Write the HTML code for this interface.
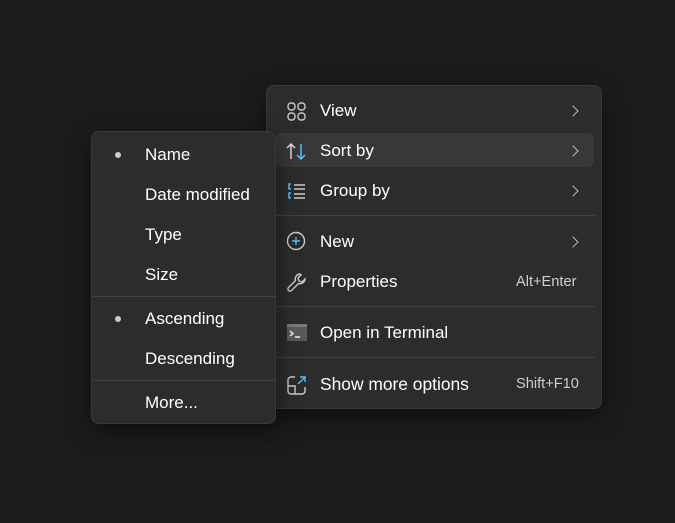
<!DOCTYPE html>
<html><head><style>
body{margin:0;width:675px;height:523px;background:#1c1c1c;font-family:"Liberation Sans",sans-serif;color:#fff;position:relative;overflow:hidden}
.m{position:absolute;background:#2c2c2c;border:1px solid #3a3a3a;border-radius:8px;box-shadow:0 8px 24px rgba(0,0,0,.5)}
.t{position:absolute;font-size:17px;line-height:20px;white-space:nowrap}
.k{position:absolute;font-size:14.6px;color:#cfcfcf;line-height:16px;white-space:nowrap}
.sep{position:absolute;height:1px;background:#404040}
.ch{position:absolute;width:7px;height:7px;border-right:1.5px solid #bbb;border-top:1.5px solid #bbb;transform:rotate(45deg)}
.dot{position:absolute;width:6px;height:6px;border-radius:50%;background:#ccc}
svg{position:absolute}
</style></head><body>
<div class="m" style="left:266px;top:85px;width:334px;height:322px">
 <div style="position:absolute;left:9px;top:47px;width:318px;height:34px;background:#383838;border-radius:5px"></div>
 <svg style="left:19px;top:15px" width="22" height="22" viewBox="0 0 22 22" fill="none" stroke="#c8c8c8" stroke-width="1.4"><rect x="2" y="2" width="7" height="7" rx="3"/><rect x="12" y="2" width="7" height="7" rx="3"/><rect x="2" y="12" width="7" height="7" rx="3"/><rect x="12" y="12" width="7" height="7" rx="3"/></svg>
 <div class="t" style="left:53px;top:15px">View</div><div class="ch" style="left:302px;top:21px"></div>
 <svg style="left:18px;top:55px" width="24" height="22" viewBox="0 0 24 22" fill="none" stroke-width="1.5"><path d="M6 18V3M2 7l4-4 4 4" stroke="#ddd"/><path d="M16 3v15M12 14l4 4 4-4" stroke="#4cc2ff"/></svg>
 <div class="t" style="left:53px;top:55px">Sort by</div><div class="ch" style="left:302px;top:61px"></div>
 <svg style="left:19px;top:95px" width="22" height="22" viewBox="0 0 22 22" fill="none" stroke-width="1.5"><path d="M5 3H3v5h2M5 12H3v5h2" stroke="#4cc2ff"/><path d="M8 4h11M8 8h11M8 13h11M8 17h11" stroke="#ccc"/></svg>
 <div class="t" style="left:53px;top:95px">Group by</div><div class="ch" style="left:302px;top:101px"></div>
 <div class="sep" style="left:9px;right:6px;top:129px"></div>
 <svg style="left:19px;top:145px" width="22" height="22" viewBox="0 0 22 22" fill="none" stroke-width="1.4"><circle cx="10" cy="10" r="8.5" stroke="#ccc"/><path d="M10 6v8M6 10h8" stroke="#4cc2ff"/></svg>
 <div class="t" style="left:53px;top:146px">New</div><div class="ch" style="left:302px;top:152px"></div>
 <svg style="left:19px;top:186px" width="22" height="22" viewBox="0 0 22 22" fill="none" stroke="#ccc" stroke-width="1.4"><path d="M14 2a5 5 0 0 0-4.5 6.5L2.5 15.5a2 2 0 0 0 3 3l7-7A5 5 0 0 0 19 7l-3 3-3-1-1-3 3-3a5 5 0 0 0-1-1z"/></svg>
 <div class="t" style="left:53px;top:186px">Properties</div><div class="k" style="left:249px;top:188px">Alt+Enter</div>
 <div class="sep" style="left:9px;right:6px;top:220px"></div>
 <svg style="left:19px;top:237px" width="22" height="20" viewBox="0 0 22 20"><rect x="1" y="1" width="20" height="17" fill="#5a5a5a"/><rect x="1" y="1" width="20" height="3" fill="#7a7a7a"/><path d="M4 8l3 2.5L4 13" stroke="#fff" stroke-width="1.4" fill="none"/><path d="M9 14h5" stroke="#fff" stroke-width="1.4"/></svg>
 <div class="t" style="left:53px;top:237px">Open in Terminal</div>
 <div class="sep" style="left:9px;right:6px;top:271px"></div>
 <svg style="left:19px;top:288px" width="22" height="22" viewBox="0 0 22 22" fill="none" stroke-width="1.4"><path d="M9 3H5a3 3 0 0 0-3 3v11a3 3 0 0 0 3 3h11a3 3 0 0 0 3-3v-4M2 12h7v8" stroke="#ccc"/><path d="M12 10l7-7M14 3h5v5" stroke="#4cc2ff"/></svg>
 <div class="t" style="left:53px;top:288px;font-size:17.4px">Show more options</div><div class="k" style="left:249px;top:290px">Shift+F10</div>
</div>
<div class="m" style="left:91px;top:131px;width:183px;height:291px">
 <div class="dot" style="left:23px;top:20px"></div>
 <div class="t" style="left:53px;top:13px">Name</div>
 <div class="t" style="left:53px;top:53px">Date modified</div>
 <div class="t" style="left:53px;top:93px">Type</div>
 <div class="t" style="left:53px;top:133px">Size</div>
 <div class="sep" style="left:0;right:0;top:164px"></div>
 <div class="dot" style="left:23px;top:184px"></div>
 <div class="t" style="left:53px;top:177px">Ascending</div>
 <div class="t" style="left:53px;top:217px">Descending</div>
 <div class="sep" style="left:0;right:0;top:248px"></div>
 <div class="t" style="left:53px;top:261px">More...</div>
</div>
</body></html>
